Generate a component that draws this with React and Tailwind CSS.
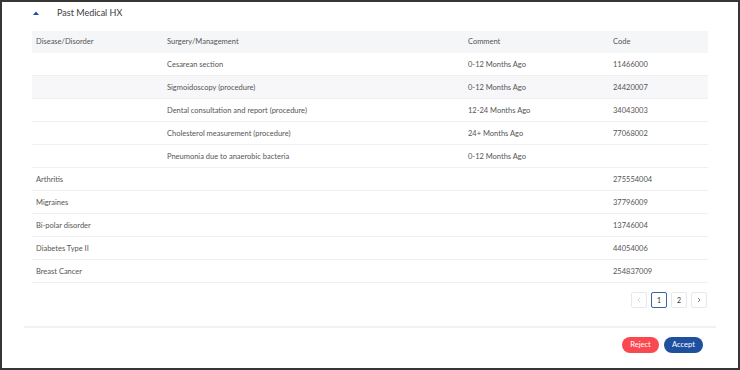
import React from "react";

const rows = [
  ["", "Cesarean section", "0-12 Months Ago", "11466000"],
  ["", "Sigmoidoscopy (procedure)", "0-12 Months Ago", "24420007", true],
  ["", "Dental consultation and report (procedure)", "12-24 Months Ago", "34043003"],
  ["", "Cholesterol measurement (procedure)", "24+ Months Ago", "77068002"],
  ["", "Pneumonia due to anaerobic bacteria", "0-12 Months Ago", ""],
  ["Arthritis", "", "", "275554004"],
  ["Migraines", "", "", "37796009"],
  ["Bi-polar disorder", "", "", "13746004"],
  ["Diabetes Type II", "", "", "44054006"],
  ["Breast Cancer", "", "", "254837009"],
];

export default function App() {
  return (
    <div
      className="w-[740px] h-[370px] border-2 border-[#363636] bg-white flex flex-col text-[#4a4a4a]"
      style={{ fontFamily: "Lato, 'Open Sans', sans-serif" }}
    >
      <div className="h-[22px] flex items-center pl-[31px]">
        <svg width="6" height="4" viewBox="0 0 6 4">
          <path d="M0 4 L3 0.5 L6 4 Z" fill="#1f4fa0" />
        </svg>
        <span className="ml-[18px] text-[9px] text-[#3d3d3d]">Past Medical HX</span>
      </div>
      <div className="px-[30px] mt-[7px]">
        <div className="grid grid-cols-[131px_301px_145px_1fr] h-[22px] items-center bg-[#f5f6f8] text-[7.5px] text-[#555] pl-[4px]">
          <div>Disease/Disorder</div>
          <div>Surgery/Management</div>
          <div>Comment</div>
          <div>Code</div>
        </div>
        {rows.map((r, i) => (
          <div
            key={i}
            className={
              "grid grid-cols-[131px_301px_145px_1fr] h-[23px] items-center border-b border-[#efeff2] text-[7.5px] text-[#555] pl-[4px] pt-[1px] " +
              (r[4] ? "bg-[#f7f7f9]" : "bg-white")
            }
          >
            <div>{r[0]}</div>
            <div>{r[1]}</div>
            <div>{r[2]}</div>
            <div>{r[3]}</div>
          </div>
        ))}
        <div className="flex justify-end gap-[4px] mt-[9px] pr-[1px]">
          <div className="w-[16px] h-[16px] border border-[#e6e8ec] rounded-[2px] flex items-center justify-center">
            <svg width="6" height="6" viewBox="0 0 6 6">
              <path d="M4 1 L2 3 L4 5" fill="none" stroke="#c4c7cc" strokeWidth="0.8" />
            </svg>
          </div>
          <div className="w-[16px] h-[16px] border border-[#3b63ad] rounded-[2px] flex items-center justify-center text-[7px] text-[#333]">
            1
          </div>
          <div className="w-[16px] h-[16px] border border-[#e6e8ec] rounded-[2px] flex items-center justify-center text-[7px] text-[#333]">
            2
          </div>
          <div className="w-[16px] h-[16px] border border-[#e6e8ec] rounded-[2px] flex items-center justify-center">
            <svg width="6" height="6" viewBox="0 0 6 6">
              <path d="M2 1 L4 3 L2 5" fill="none" stroke="#555" strokeWidth="0.8" />
            </svg>
          </div>
        </div>
      </div>
      <div className="mx-[22px] mt-[18px] border-t-2 border-[#f0f1f4]"></div>
      <div className="flex justify-end gap-[5px] pr-[35px] mt-[9px]">
        <button className="w-[37px] h-[16px] rounded-full bg-[#f9484f] text-white text-[7.5px] flex items-center justify-center">
          Reject
        </button>
        <button className="w-[39px] h-[16px] rounded-full bg-[#1f4f9f] text-white text-[7.5px] flex items-center justify-center">
          Accept
        </button>
      </div>
    </div>
  );
}
